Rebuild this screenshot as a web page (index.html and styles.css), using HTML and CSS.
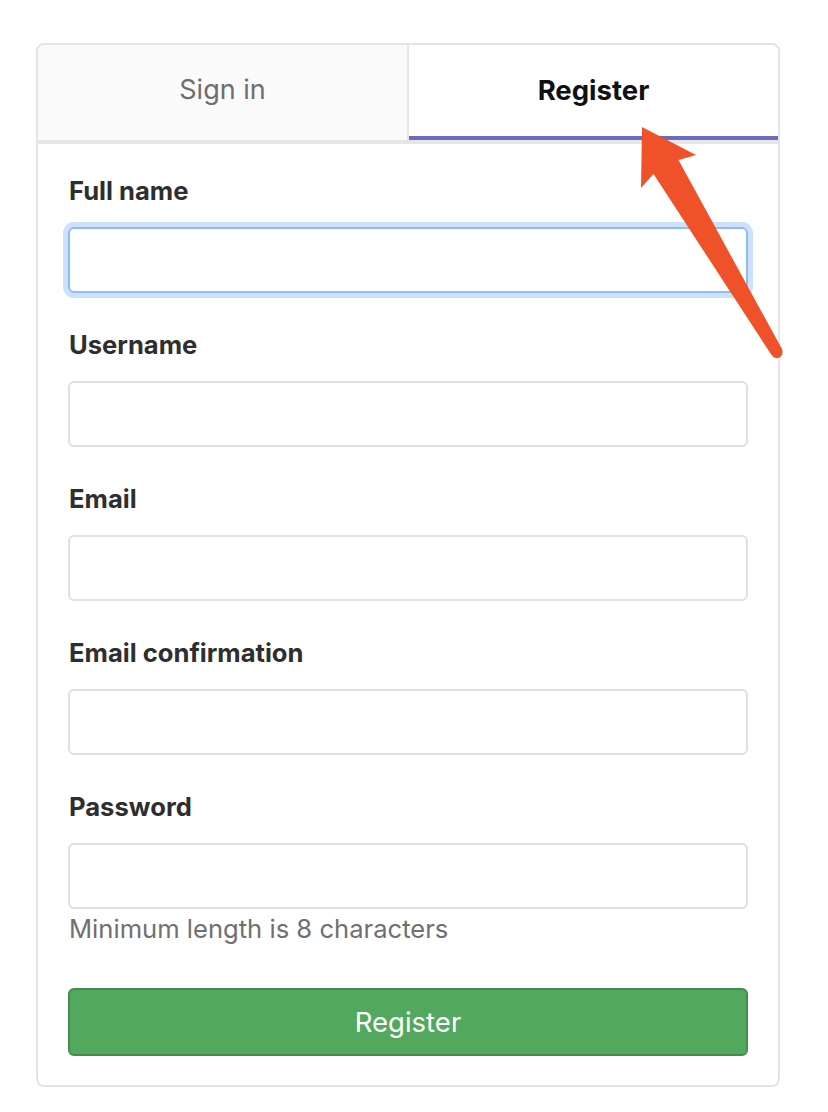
FILE: index.html
```html
<!DOCTYPE html>
<html lang="en">
<head>
<meta charset="utf-8">
<title>Register</title>
<link rel="stylesheet" href="styles.css">
</head>
<body>
<div class="card">
  <div class="tabs">
    <div class="tab">Sign in</div>
    <div class="tab active">Register</div>
  </div>
  <form class="form">
    <div class="group">
      <label class="label">Full name</label>
      <div class="input focused"></div>
    </div>
    <div class="group">
      <label class="label">Username</label>
      <div class="input"></div>
    </div>
    <div class="group">
      <label class="label">Email</label>
      <div class="input"></div>
    </div>
    <div class="group">
      <label class="label">Email confirmation</label>
      <div class="input"></div>
    </div>
    <div class="group last">
      <label class="label">Password</label>
      <div class="input"></div>
      <div class="help">Minimum length is 8 characters</div>
    </div>
    <div class="button">Register</div>
  </form>
</div>
<svg class="arrow" width="828" height="1112" viewBox="0 0 828 1112">
  <path d="M642 127 L696 155 L678.5 160 L782 349 Q784 356 778 358 Q774 359 771.5 355 L653.5 174 L641 188 Z" fill="#ef5229"/>
</svg>
</body>
</html>
```

FILE: styles.css
```css
* { box-sizing: border-box; }
html, body { margin: 0; padding: 0; background: #fff; }
body {
  font-family: Inter, "Noto Sans", "Liberation Sans", sans-serif;
  width: 828px;
  height: 1112px;
  position: relative;
  overflow: hidden;
}
.card {
  margin: 43px 0 0 36px;
  width: 744px;
  border: 2px solid #e4e4e4;
  border-radius: 8px;
  overflow: hidden;
  background: #fff;
}
.tabs {
  display: flex;
  border-bottom: 4px solid #e6e6e6;
}
.tab {
  flex: 1;
  height: 95px;
  padding-top: 28px;
  text-align: center;
  font-size: 27px;
  line-height: 34px;
  color: #6e6e6e;
  background: #fafafa;
  border-right: 2px solid #e6e6e6;
}
.tab.active {
  background: #fff;
  color: #111;
  font-weight: 700;
  font-size: 27.5px;
  border-right: none;
  border-bottom: 4px solid #6a6bc3;
}
.form {
  display: flex;
  flex-direction: column;
  padding: 30px 30px 29px 31px;
}
.group {
  display: flex;
  flex-direction: column;
  margin-bottom: 35px;
}
.group.last { margin-bottom: 0; }
.label {
  font-size: 25.6px;
  line-height: 34px;
  font-weight: 700;
  color: #2e2e2e;
  margin-bottom: 19px;
}
.input {
  height: 66px;
  border: 2px solid #e0e0e0;
  border-radius: 6px;
  background: #fff;
  margin-left: -1px;
}
.input.focused {
  border-color: #8ebdf5;
  box-shadow: 0 0 0 5px #cde1fb;
}
.help {
  margin-top: 3px;
  font-size: 25.6px;
  line-height: 34px;
  color: #707070;
}
.button {
  margin-top: 42px;
  margin-left: -1px;
  height: 68px;
  display: flex;
  align-items: center;
  justify-content: center;
  background: #52a95e;
  border: 2px solid #428c4d;
  border-radius: 6px;
  color: #fff;
  font-size: 27.5px;
}
.arrow {
  position: absolute;
  left: 0;
  top: 0;
  pointer-events: none;
}
```
